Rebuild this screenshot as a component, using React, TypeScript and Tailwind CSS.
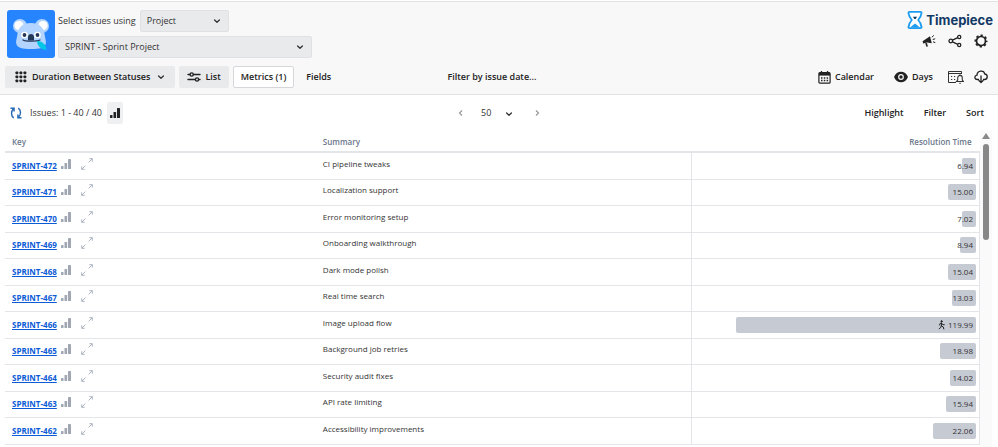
import React from "react";

type Row = { key: string; summary: string; value: number; running?: boolean };

const rows: Row[] = [
  { key: "SPRINT-472", summary: "CI pipeline tweaks", value: 6.94 },
  { key: "SPRINT-471", summary: "Localization support", value: 15.0 },
  { key: "SPRINT-470", summary: "Error monitoring setup", value: 7.02 },
  { key: "SPRINT-469", summary: "Onboarding walkthrough", value: 8.94 },
  { key: "SPRINT-468", summary: "Dark mode polish", value: 15.04 },
  { key: "SPRINT-467", summary: "Real time search", value: 13.03 },
  { key: "SPRINT-466", summary: "Image upload flow", value: 119.99, running: true },
  { key: "SPRINT-465", summary: "Background job retries", value: 18.98 },
  { key: "SPRINT-464", summary: "Security audit fixes", value: 14.02 },
  { key: "SPRINT-463", summary: "API rate limiting", value: 15.94 },
  { key: "SPRINT-462", summary: "Accessibility improvements", value: 22.06 },
];

function Chevron({ className = "" }: { className?: string }) {
  return (
    <svg viewBox="0 0 8 8" className={"pointer-events-none size-2 shrink-0 " + className} fill="none" stroke="#333" strokeWidth="1.3" strokeLinecap="round" strokeLinejoin="round" aria-hidden="true">
      <path d="M1.6 3 4 5.300 6.400 3" />
    </svg>
  );
}

function Koala() {
  return (
    <svg viewBox="0 0 48 48" className="size-12 shrink-0" role="img" aria-label="Sprint Project">
      <rect width="48" height="48" rx="3" fill="#2684ff" />
      <circle cx="13" cy="16" r="7" fill="#b3d4ff" />
      <circle cx="35" cy="16" r="7" fill="#b3d4ff" />
      <circle cx="12" cy="15.500" r="4.600" fill="#fff" />
      <circle cx="36" cy="15.500" r="4.600" fill="#fff" />
      <path d="M24 13c8.500 0 13 4.500 13.700 12 .3 3 1.800 6.500 1 9-1.200 4-6 5-14.700 5s-13.500-1-14.700-5c-.8-2.500.7-6 1-9C11 17.500 15.500 13 24 13Z" fill="#b3d4ff" />
      <circle cx="17.500" cy="25" r="3.300" fill="#fff" />
      <circle cx="30.500" cy="25" r="3.300" fill="#fff" />
      <circle cx="17.500" cy="25" r="1.900" fill="#253858" />
      <circle cx="30.500" cy="25" r="1.900" fill="#253858" />
      <path d="M21 30.500V27c0-4 6-4 6 0v3.500Z" fill="#253858" />
      <path d="M16 30c2 1.500 14 1.500 17 0" fill="none" stroke="#253858" strokeWidth="1.300" strokeLinecap="round" />
      <path d="M30 31c4 0 9 2 9.500 9-4.500-.5-9-2.500-9.500-9Z" fill="#00c7e5" />
    </svg>
  );
}

function GridIcon() {
  const steps = [0, 4, 8];
  return (
    <svg viewBox="0 0 12 12" className="size-3" fill="#222" aria-hidden="true">
      {steps.map((y) => steps.map((x) => <rect key={x + "-" + y} x={x + 0.5} y={y + 0.5} width="2.800" height="2.800" rx="0.700" />))}
    </svg>
  );
}

function SlidersIcon() {
  return (
    <svg viewBox="0 0 14 12" className="h-3 w-3.5" fill="none" stroke="#222" strokeWidth="1.400" aria-hidden="true">
      <path d="M1 3.500h2M6.500 3.500H13M1 8.500h7M12 8.500h1" strokeLinecap="round" />
      <circle cx="4.700" cy="3.500" r="1.600" />
      <circle cx="10" cy="8.500" r="1.600" />
    </svg>
  );
}

function BarsIcon() {
  return (
    <svg viewBox="0 0 10 10" className="size-2.5" fill="currentColor" aria-hidden="true">
      <rect x="0" y="7" width="2.500" height="3" rx="0.600" />
      <rect x="3.500" y="4" width="2.600" height="6" rx="0.600" />
      <rect x="7" y="0" width="3" height="10" rx="0.600" />
    </svg>
  );
}

function ExpandIcon() {
  return (
    <svg viewBox="0 0 12 12" className="size-3" fill="none" stroke="#a5adba" strokeWidth="0.900" aria-hidden="true">
      <path d="M8.300 0.700h3v3M11.300 0.700 7.600 4.400M3.700 11.300h-3v-3M0.700 11.300l3.700-3.700" />
    </svg>
  );
}

function RefreshIcon() {
  return (
    <svg viewBox="0 0 12 12" className="size-3" fill="none" stroke="#2468b4" strokeWidth="1.400" aria-hidden="true">
      <path d="M3.800 10.800C0.800 9 0.800 4.500 3.500 1.800M0.500 1.200h3.600v3.300M8.200 1.200c3 1.800 3 6.300.3 9M11.500 10.800H7.900V7.500" />
    </svg>
  );
}

function MegaphoneIcon() {
  return (
    <svg viewBox="0 0 14 14" className="size-3.5" aria-hidden="true">
      <path d="M8 2.200 9.800 9.300 5 8.500 1.200 9.500.6 7.300Z" fill="#222" />
      <path d="m3.200 9.300 1.200 3.500 1.500-.4-.9-3.500Z" fill="#222" />
      <path d="m10 3.300 1.700-2M10.700 5.500l2.500-.7M11 7.800l2.300.8" stroke="#222" strokeWidth="1" />
    </svg>
  );
}

function ShareIcon() {
  return (
    <svg viewBox="0 0 14 14" className="size-3.5" fill="none" stroke="#222" strokeWidth="1.300" aria-hidden="true">
      <circle cx="2.800" cy="7" r="1.800" />
      <circle cx="11.200" cy="3" r="1.600" />
      <circle cx="11.200" cy="11" r="1.600" />
      <path d="m4.500 6.200 5.200-2.500M4.500 7.800l5.200 2.500" />
    </svg>
  );
}

function GearIcon() {
  return (
    <svg viewBox="0 0 14 14" className="size-3.5" fill="none" stroke="#222" aria-hidden="true">
      <circle cx="7" cy="7" r="4.500" strokeWidth="1.700" />
      <circle cx="7" cy="7" r="5.700" strokeWidth="1.600" strokeDasharray="2.400 2.077" strokeDashoffset="1.200" />
    </svg>
  );
}

function CalendarIcon() {
  return (
    <svg viewBox="0 0 13 13" className="size-[13px]" aria-hidden="true">
      <path d="M3.500 0v2.500M9.500 0v2.500" stroke="#222" strokeWidth="1.300" />
      <rect x="0.900" y="1.700" width="11.200" height="10.500" rx="1" fill="none" stroke="#222" strokeWidth="1.200" />
      <path d="M1 1.700h11v2.900H1Z" fill="#222" />
      <path d="M3 7h1.500M5.800 7h1.500M8.600 7h1.500M3 9.500h1.500M5.800 9.500h1.500M8.600 9.500h1.500" stroke="#222" strokeWidth="1.300" />
    </svg>
  );
}

function EyeIcon() {
  return (
    <svg viewBox="0 0 14 12" className="h-3 w-3.5" aria-hidden="true">
      <path d="M0 6c2.500-7 11.500-7 14 0-2.500 7-11.500 7-14 0Z" fill="#222" />
      <circle cx="7" cy="6" r="2.900" fill="#f8f8f8" />
      <circle cx="7" cy="6" r="1.700" fill="#222" />
    </svg>
  );
}

function ReminderIcon() {
  return (
    <svg viewBox="0 0 17 14" className="h-3.5 w-[17px]" fill="none" stroke="#333" aria-hidden="true">
      <path d="M9 12.500H1.500v-11h13V4M1.500 3.500h13" />
      <path d="M4 6.500h1.200M7 6.500h1.200M4 9.500h1.200M7 9.500h1.200" strokeWidth="1.200" />
      <path d="M9.500 11.500h7l-1.200-1.500V8c0-3.500-4.600-3.500-4.600 0v2ZM12.300 13.200h1.500M13 5v-.8" strokeWidth="1.100" />
    </svg>
  );
}

function CloudIcon() {
  return (
    <svg viewBox="0 0 14 14" className="size-3.5" fill="none" stroke="#222" strokeWidth="1.300" strokeLinecap="round" strokeLinejoin="round" aria-hidden="true">
      <path d="M4.500 9.500H3.400C0.200 9.500 0 5.700 3 5.200c.2-5 7-5.500 7.700-1.200 3.500.3 3.200 5.500-.2 5.500h-1" />
      <path d="M7 6v6.300M4.900 10.500 7 12.600l2.100-2.100" />
    </svg>
  );
}

function Hourglass() {
  return (
    <svg viewBox="0 0 16 20" className="h-5 w-4" aria-hidden="true">
      <path d="M2.500 1.800h11c.8 0 1.200.6 1 1.400-.4 3-1.600 5-3.300 6.800 1.700 1.800 2.900 3.800 3.300 6.800.2.800-.2 1.400-1 1.400h-11c-.8 0-1.200-.6-1-1.400.4-3 1.600-5 3.300-6.800-1.700-1.800-2.900-3.800-3.300-6.800-.2-.8.2-1.400 1-1.400Z" fill="#fff" stroke="#1d9bf0" strokeWidth="1.800" strokeLinejoin="round" />
      <path d="M6 6.800h4L8.600 9H7.400Z" fill="#0b3a66" />
      <path d="M3 17.500 8 13.500l5 4Z" fill="#1d9bf0" />
    </svg>
  );
}

function Runner() {
  return (
    <svg viewBox="0 0 8 10" className="h-2.5 w-2" fill="none" stroke="#222" strokeWidth="1" strokeLinecap="round" aria-hidden="true">
      <circle cx="3.500" cy="1.300" r="0.600" fill="#222" />
      <path d="M3.500 3 3.300 5.800l2 1.200.5 2M3.300 5.800 2.700 7.500l-1.500 1.200M1.500 5l.6-1.500L3.500 3l1.300 1.700h1.500" />
    </svg>
  );
}

function Arrow({ d }: { d: string }) {
  return (
    <svg viewBox="0 0 8 8" className="size-2" fill="none" stroke="#999" strokeWidth="1.200" aria-hidden="true">
      <path d={d} />
    </svg>
  );
}

export default function App() {
  return (
    <div className="flex h-screen flex-col overflow-hidden bg-white font-['Open_Sans','Noto_Sans',sans-serif] text-[9px] leading-3 text-[#333]">
      <header className="mt-px shrink-0 border-y border-[#e2e3e5] bg-[#f8f8f8] px-[5px] pt-2">
        <div className="flex items-start justify-between pl-0.5">
          <div className="flex gap-[3px]">
            <Koala />
            <div className="flex w-[254px] flex-col gap-1">
              <div className="flex items-center gap-1">
                <label htmlFor="using" className="whitespace-nowrap">Select issues using</label>
                <div className="relative">
                  <select id="using" className="h-[22px] w-[89px] appearance-none rounded-xs border border-[#dfe1e4] bg-[#e9eaec] px-1.5">
                    <option>Project</option>
                  </select>
                  <Chevron className="absolute top-[7px] right-2" />
                </div>
              </div>
              <div className="relative">
                <select aria-label="Project" className="h-[22px] w-full appearance-none rounded-xs border border-[#dfe1e4] bg-[#e9eaec] px-1.5">
                  <option>SPRINT - Sprint Project</option>
                </select>
                <Chevron className="absolute top-[7px] right-2" />
              </div>
            </div>
          </div>
          <div className="flex flex-col items-end">
            <div className="flex items-center gap-[3px]">
              <Hourglass />
              <span className="font-[Inter] text-[13px] leading-5 font-bold text-[#123a66]">Timepiece</span>
            </div>
            <div className="mt-1 flex gap-3 pr-[5px]">
              <button aria-label="Announcements"><MegaphoneIcon /></button>
              <button aria-label="Share"><ShareIcon /></button>
              <button aria-label="Settings"><GearIcon /></button>
            </div>
          </div>
        </div>
        <div className="mt-2 mb-1.5 grid h-[22px] grid-cols-[1fr_auto_1fr] items-center font-semibold text-[#222]">
          <div className="flex h-full gap-1">
            <button className="flex items-center gap-[5px] rounded-xs bg-[#e9eaec] px-2.5">
              <GridIcon />
              Duration Between Statuses
              <Chevron className="ml-0.5" />
            </button>
            <button className="flex items-center gap-1 rounded-xs bg-[#e9eaec] px-2"><SlidersIcon />List</button>
            <button className="rounded-xs border border-[#d5d7da] bg-white px-[7px]">Metrics (1)</button>
            <button className="px-2">Fields</button>
          </div>
          <button className="pr-3.5">Filter by issue date...</button>
          <div className="flex items-center justify-end pr-[5px]">
            <button className="flex items-center gap-1"><CalendarIcon />Calendar</button>
            <button className="ml-5 flex items-center gap-1"><EyeIcon />Days</button>
            <button className="ml-3.5" aria-label="Reminders"><ReminderIcon /></button>
            <button className="ml-2.5" aria-label="Download"><CloudIcon /></button>
          </div>
        </div>
      </header>

      <div className="grid h-[35px] shrink-0 grid-cols-3 items-center px-2.5">
        <div className="flex items-center">
          <button aria-label="Refresh"><RefreshIcon /></button>
          <span className="ml-2">Issues: 1 - 40 / 40</span>
          <button aria-label="Charts" className="ml-[5px] rounded-xs bg-[#eff0f2] px-[3px] py-1.5 text-[#222]"><BarsIcon /></button>
        </div>
        <div className="flex items-center justify-center gap-4">
          <button aria-label="Previous page"><Arrow d="M5 1.500 2.500 4 5 6.500" /></button>
          <div className="relative">
            <select aria-label="Page size" className="w-9 appearance-none"><option>50</option></select>
            <Chevron className="absolute top-[3px] right-1" />
          </div>
          <button aria-label="Next page"><Arrow d="M3 1.500 5.500 4 3 6.500" /></button>
        </div>
        <div className="flex justify-end gap-5 pr-1 font-semibold text-[#222]">
          <button>Highlight</button>
          <button>Filter</button>
          <button>Sort</button>
        </div>
      </div>

      <div className="flex min-h-0 flex-1 pr-1.5 pl-[5px]">
        <div className="flex-1 overflow-hidden">
          <table className="w-full table-fixed border-collapse text-[8px]">
            <thead>
              <tr className="h-[22px] border-b-2 border-[#e4e5e8] text-left text-[#6b778c]">
                <th className="w-[32%] pt-0.5 pl-[7px] font-semibold">Key</th>
                <th className="pt-0.5 pl-1.5 font-semibold">Summary</th>
                <th className="w-[288px] pt-0.5 pr-2 text-right font-semibold">Resolution Time</th>
              </tr>
            </thead>
            <tbody>
              {rows.map((r) => (
                <tr key={r.key} className="border-b border-[#e4e5e8] odd:h-[27px] even:h-[26px]">
                  <td className="pl-[7px]">
                    <div className="flex items-center">
                      <a href="#" className="font-bold text-[#0c5bd6] underline">{r.key}</a>
                      <span className="ml-1 pb-1 text-[#a0a7b3]"><BarsIcon /></span>
                      <button aria-label={"Expand " + r.key} className="ml-2.5 pb-1"><ExpandIcon /></button>
                    </div>
                  </td>
                  <td className="pb-1 pl-1.5">{r.summary}</td>
                  <td className="border-x border-[#e4e5e8] pr-[3px]">
                    <div className="flex justify-end">
                      <div className="flex h-4 items-center justify-end rounded-xs bg-[#c5cad3] pr-[3px]" style={{ width: Math.max(14, Math.round(r.value * 2.02 - 2)) }}>
                        {r.running && <Runner />}
                        <span className="ml-0.5">{r.value.toFixed(2)}</span>
                      </div>
                    </div>
                  </td>
                </tr>
              ))}
            </tbody>
          </table>
        </div>
        <div className="flex w-3 flex-col items-center bg-[#fafafa]" aria-hidden="true">
          <svg viewBox="0 0 8 6" className="mt-[3px] h-1.5 w-2" fill="#888"><path d="M4 0 8 6H0Z" /></svg>
          <div className="mt-[5px] h-24 w-1.5 rounded-full bg-[#888]" />
        </div>
      </div>
    </div>
  );
}
